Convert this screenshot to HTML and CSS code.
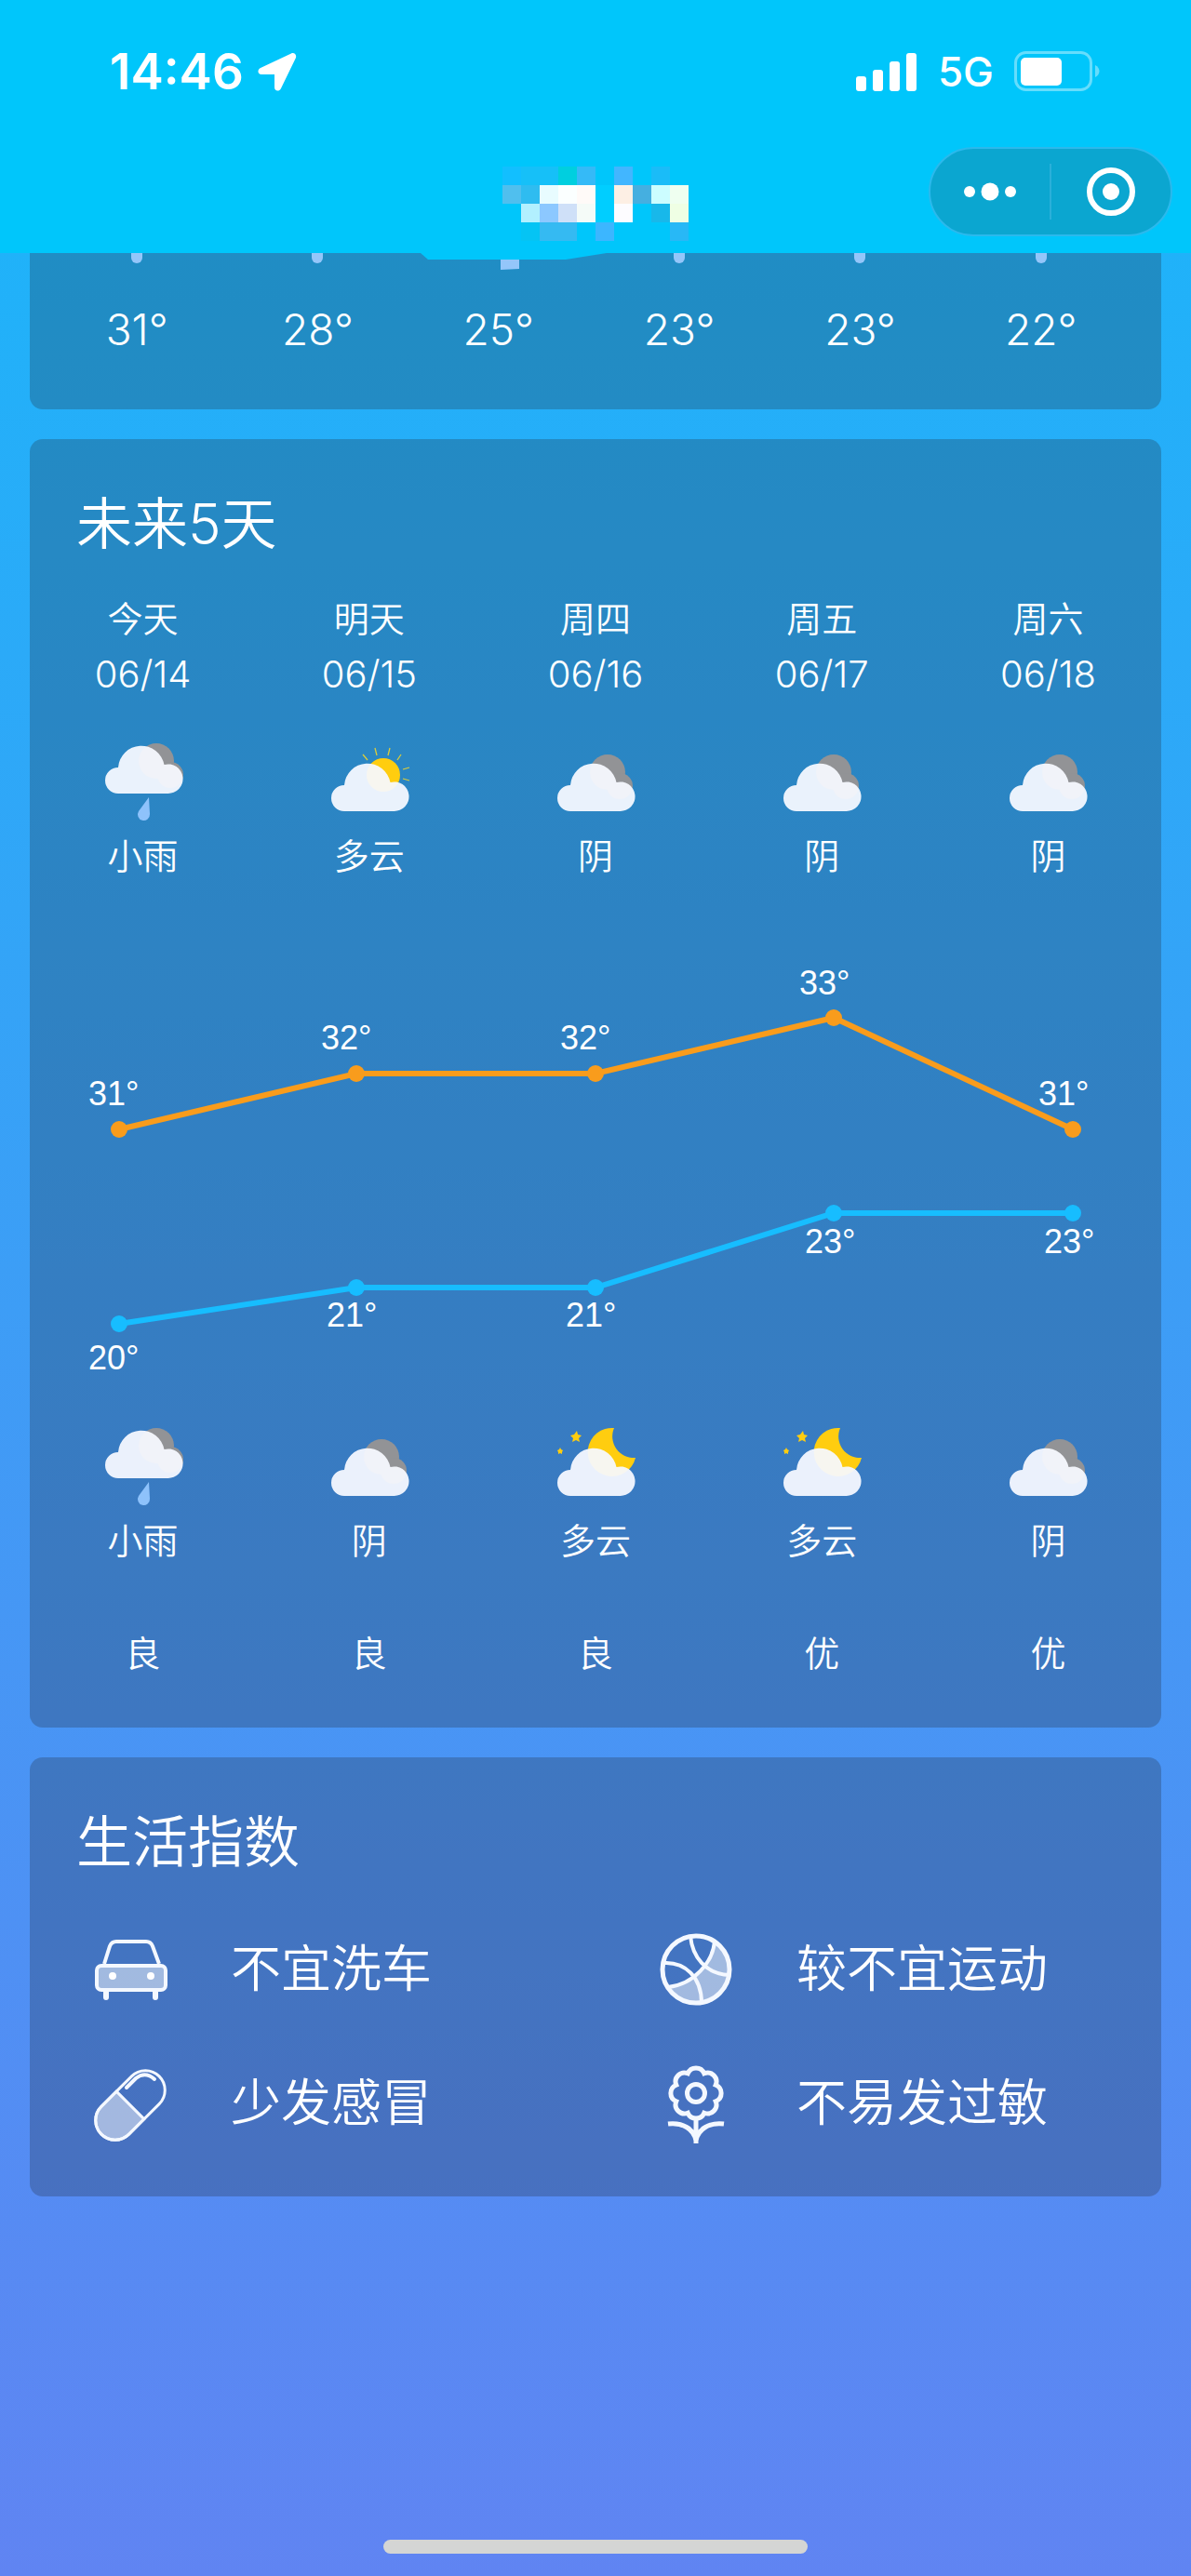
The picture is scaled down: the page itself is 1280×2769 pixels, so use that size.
FILE: index.html
```html
<!DOCTYPE html>
<html lang="zh-CN">
<head>
  <meta charset="UTF-8">
  <meta name="viewport" content="width=device-width, initial-scale=1.0">
  <title>天气</title>
  <link rel="stylesheet" href="styles.css">
</head>
<body>

  <!-- ICONS -->
  <svg class="sprite" aria-hidden="true">
    <symbol id="cloud" viewBox="0 0 88 88">
      <path fill="#f6f9ff" fill-opacity=".94" d="M17 57a14 14 0 0 1 0-28A25 25 0 0 1 66.500 26A15.800 15.800 0 1 1 70 57Z"/>
    </symbol>
    <symbol id="rain" viewBox="0 0 88 88">
      <g fill="#929396"><circle cx="58" cy="22" r="19"/><circle cx="73" cy="37" r="14"/></g>
      <use href="#cloud" width="88" height="88"/>
      <path fill="#8ec2fb" d="M50 61L51 79a6.500 6.500 0 1 1-12-3Z"/>
    </symbol>
    <symbol id="overcast" viewBox="0 0 88 88">
      <g fill="#929396"><circle cx="57" cy="34" r="19"/><circle cx="70" cy="49" r="14"/></g>
      <use href="#cloud" y="19" width="88" height="88"/>
    </symbol>
    <symbol id="cloudy-day" viewBox="0 0 88 88">
      <path stroke="#d9cc3c" stroke-width="1.300" d="M37 15l5 6M50 8l2 8M66 8l-2 8M78 15l-4 6M87 29l-7 2M87 43l-7-2"/>
      <circle cx="59" cy="37" r="18" fill="#ffcd0f"/>
      <use href="#cloud" y="19" width="88" height="88"/>
    </symbol>
    <symbol id="cloudy-night" viewBox="0 0 88 88">
      <path fill="#ffcd0f" d="M64 3A26 26 0 1 0 87 35A23 23 0 0 1 64 3Z"/>
      <path fill="#ffcd0f" d="M24 6l1 4 4 1-3 3 1 4-4-2-4 2 1-4-3-3 4-1zM6 24l1 2 2 1-1 2v2l-2-1-2 1v-2l-1-2 2-1z"/>
      <use href="#cloud" y="19" width="88" height="88"/>
    </symbol>
  </svg>

  <!-- HEADER -->
  <header class="header">
    <div class="status-bar">
      <span class="time">14:46</span>
      <svg class="location" viewBox="0 0 42 42"><path fill="#fff" d="M36 1.500L3 17c-4 2-3 7 1 7h14v14c0 4 5 5 7 1L41 6c1-3-2-6-5-4.500z"/></svg>
      <div class="status-right">
        <svg class="signal" viewBox="0 0 66 42">
          <g fill="#fff"><rect y="26" width="11" height="16" rx="3"/><rect x="18" y="19" width="11" height="23" rx="3"/><rect x="36" y="10" width="11" height="32" rx="3"/><rect x="54" y="1" width="11" height="41" rx="3"/></g>
        </svg>
        <span class="network">5G</span>
        <svg class="battery" viewBox="0 0 92 44">
          <rect x="1.500" y="1.500" width="81" height="40" rx="11" fill="none" stroke="#fff" stroke-opacity=".4" stroke-width="3"/>
          <rect x="7" y="7" width="44" height="30" rx="5" fill="#fff"/>
          <path fill="#fff" fill-opacity=".4" d="M87 15c6 3 6 10 0 13z"/>
        </svg>
      </div>
    </div>
    <div class="nav-bar">
      <svg class="city" viewBox="0 0 200 80" shape-rendering="crispEdges" role="img" aria-label="城市">
        <path fill="#12bfff" d="M0 0h20v20H0z"/><path fill="#16c0f8" d="M20 0h40v20H20z"/><path fill="#00cfdf" d="M60 0h20v20H60z"/><path fill="#35baf7" d="M80 0h20v20H80z"/><path fill="#42b6ff" d="M120 0h20v20h-20z"/><path fill="#1abcf8" d="M160 0h20v20h-20z"/>
        <path fill="#50bfee" d="M0 20h20v20H0z"/><path fill="#2fbcf0" d="M20 20h20v20H20z"/><path fill="#e8fcff" d="M40 20h20v20H40z"/><path fill="#fbffff" d="M60 20h20v20H60z"/><path fill="#fffaf8" d="M80 20h20v20H80z"/><path fill="#00ceff" d="M100 20h20v40h-20z"/><path fill="#fdefe4" d="M120 20h20v20h-20z"/><path fill="#45afe0" d="M140 20h20v20h-20z"/><path fill="#ccfdff" d="M160 20h20v20h-20z"/><path fill="#effff0" d="M180 20h20v20h-20z"/>
        <path fill="#b2f0ff" d="M20 40h20v20H20z"/><path fill="#8cc8ff" d="M40 40h20v20H40z"/><path fill="#cfe0f8" d="M60 40h20v20H60z"/><path fill="#f5fbf8" d="M80 40h20v20H80z"/><path fill="#fdfcff" d="M120 40h20v20h-20z"/><path fill="#18b8ea" d="M160 40h20v20h-20z"/><path fill="#efffe4" d="M180 40h20v20h-20z"/>
        <path fill="#05c4f4" d="M20 60h20v20H20z"/><path fill="#35baf2" d="M40 60h40v20H40z"/><path fill="#3cb6ff" d="M100 60h20v20h-20z"/><path fill="#28b8f6" d="M180 60h20v20h-20z"/>
      </svg>
      <div class="capsule">
        <button type="button" aria-label="更多">
          <svg width="60" height="60" viewBox="0 0 60 60" fill="#fff"><circle cx="8" cy="30" r="6"/><circle cx="30" cy="30" r="9.500"/><circle cx="52" cy="30" r="6"/></svg>
        </button>
        <button type="button" aria-label="关闭">
          <svg width="60" height="60" viewBox="0 0 60 60"><circle cx="30" cy="30" r="23" fill="none" stroke="#fff" stroke-width="6"/><circle cx="30" cy="30" r="9" fill="#fff"/></svg>
        </button>
      </div>
    </div>
    <svg class="header-edge" viewBox="0 0 200 7"><path fill="#00c6fb" d="M0 0L8 7H156L200 0Z"/></svg>
  </header>

  <main class="content">

    <!-- HOURLY -->
    <section class="card hourly">
      <div class="hour"><svg class="drop" viewBox="0 0 12 11"><path d="M0 0H12V5a6 6 0 0 1-12 0Z"/></svg><span>31°</span></div>
      <div class="hour"><svg class="drop" viewBox="0 0 12 11"><path d="M0 0H12V5a6 6 0 0 1-12 0Z"/></svg><span>28°</span></div>
      <div class="hour"><svg class="drop wide" viewBox="0 0 44 18"><path d="M24 0H44V17L24 18Z"/></svg><span>25°</span></div>
      <div class="hour"><svg class="drop" viewBox="0 0 12 11"><path d="M0 0H12V5a6 6 0 0 1-12 0Z"/></svg><span>23°</span></div>
      <div class="hour"><svg class="drop" viewBox="0 0 12 11"><path d="M0 0H12V5a6 6 0 0 1-12 0Z"/></svg><span>23°</span></div>
      <div class="hour"><svg class="drop" viewBox="0 0 12 11"><path d="M0 0H12V5a6 6 0 0 1-12 0Z"/></svg><span>22°</span></div>
    </section>

    <!-- 5 DAYS -->
    <section class="card">
      <h2>未来5天</h2>
      <div class="days">
        <div class="day"><span>今天</span><span class="date">06/14</span><svg class="weather"><use href="#rain"/></svg><span>小雨</span></div>
        <div class="day"><span>明天</span><span class="date">06/15</span><svg class="weather"><use href="#cloudy-day"/></svg><span>多云</span></div>
        <div class="day"><span>周四</span><span class="date">06/16</span><svg class="weather"><use href="#overcast"/></svg><span>阴</span></div>
        <div class="day"><span>周五</span><span class="date">06/17</span><svg class="weather"><use href="#overcast"/></svg><span>阴</span></div>
        <div class="day"><span>周六</span><span class="date">06/18</span><svg class="weather"><use href="#overcast"/></svg><span>阴</span></div>
      </div>

      <svg class="chart" viewBox="0 0 1216 582">
        <g class="high">
          <polyline points="96,264 351,204 608,204 864,144 1121,264"/>
          <circle cx="96" cy="264" r="9"/><circle cx="351" cy="204" r="9"/><circle cx="608" cy="204" r="9"/><circle cx="864" cy="144" r="9"/><circle cx="1121" cy="264" r="9"/>
        </g>
        <g class="low">
          <polyline points="96,473 351,434 608,434 864,354 1121,354"/>
          <circle cx="96" cy="473" r="9"/><circle cx="351" cy="434" r="9"/><circle cx="608" cy="434" r="9"/><circle cx="864" cy="354" r="9"/><circle cx="1121" cy="354" r="9"/>
        </g>
        <g class="labels">
          <text x="63" y="238">31°</text><text x="313" y="178">32°</text><text x="570" y="178">32°</text><text x="827" y="119">33°</text><text x="1084" y="238">31°</text>
          <text x="63" y="522">20°</text><text x="319" y="476">21°</text><text x="576" y="476">21°</text><text x="833" y="397">23°</text><text x="1090" y="397">23°</text>
        </g>
      </svg>

      <div class="nights">
        <div class="night"><svg class="weather"><use href="#rain"/></svg><span>小雨</span><span class="air">良</span></div>
        <div class="night"><svg class="weather"><use href="#overcast"/></svg><span>阴</span><span class="air">良</span></div>
        <div class="night"><svg class="weather"><use href="#cloudy-night"/></svg><span>多云</span><span class="air">良</span></div>
        <div class="night"><svg class="weather"><use href="#cloudy-night"/></svg><span>多云</span><span class="air">优</span></div>
        <div class="night"><svg class="weather"><use href="#overcast"/></svg><span>阴</span><span class="air">优</span></div>
      </div>
    </section>

    <!-- LIFE INDEX -->
    <section class="card life">
      <h2>生活指数</h2>
      <ul class="life-list">
        <li>
          <svg class="life-icon" viewBox="0 0 88 88">
            <path stroke-width="4" d="M16 38L22 19Q24 14 29 14H61Q66 14 68 19L75 38"/>
            <rect x="8" y="40" width="74" height="26" rx="5" class="tint" stroke-width="4"/>
            <path stroke-width="6" stroke-linecap="round" d="M18 68v6M71 68v6"/>
            <circle cx="25" cy="51" r="4" fill="#fff" stroke="none"/><circle cx="66" cy="51" r="4" fill="#fff" stroke="none"/>
          </svg>
          <span>不宜洗车</span>
        </li>
        <li>
          <svg class="life-icon" viewBox="0 0 88 88">
            <path class="tint" stroke="none" d="M63.500 13C62 36 42 58 15 63A36 36 0 1 0 63.500 13Z"/>
            <g stroke-width="4"><path d="M38 8C40 30 54 49 80 50M64 14C62 36 42 60 14 63M10 37C32 36 50 52 50 80"/></g>
            <circle cx="44" cy="44" r="36" stroke-width="5"/>
          </svg>
          <span>较不宜运动</span>
        </li>
        <li>
          <svg class="life-icon" viewBox="0 0 88 88">
            <g transform="rotate(45 44 46)" stroke-width="3">
              <path class="tint" d="M23 46H65V69a21 21 0 0 1-42 0Z"/>
              <rect x="23" y="2" width="42" height="88" rx="21"/>
            </g>
            <path stroke-width="4" stroke-linecap="round" d="M40 27L50 17Q60 9 70 18"/>
          </svg>
          <span>少发感冒</span>
        </li>
        <li>
          <svg class="life-icon" viewBox="0 0 88 88" stroke-width="5">
            <circle cx="44" cy="33" r="9.500"/>
            <path d="M35.200 11.800a9.500 9.500 0 0 1 17.600 0a9.500 9.500 0 0 1 12.400 12.400a9.500 9.500 0 0 1 0 17.600a9.500 9.500 0 0 1-12.400 12.400a9.500 9.500 0 0 1-17.600 0a9.500 9.500 0 0 1-12.400-12.400a9.500 9.500 0 0 1 0-17.600a9.500 9.500 0 0 1 12.400-12.400Z"/>
            <path d="M44 60V87M14 66C30 64 42 72 44 84C46 72 58 64 74 66"/>
          </svg>
          <span>不易发过敏</span>
        </li>
      </ul>
    </section>
  </main>

  <div class="home-indicator"></div>

</body>
</html>
```
FILE: styles.css
```css
* {
  box-sizing: border-box;
}

body {
  margin: 0;
  min-height: 100vh;
  display: flex;
  flex-direction: column;
  font-family: Inter, "Noto Sans CJK SC", sans-serif;
  font-weight: 350;
  color: #fff;
  background: linear-gradient(#19b7fa, #6084f2);
}

svg {
  display: block;
}

.sprite {
  position: absolute;
  width: 0;
  height: 0;
}

/* header */
.header {
  position: relative;
  height: 272px;
  background: #00c6fb;
}

.status-bar {
  display: flex;
  align-items: center;
  padding: 44px 98px 0 118px;
  height: 110px;
}

.time {
  font-size: 53px;
  font-weight: 600;
}

.location {
  width: 42px;
  height: 42px;
  margin-left: 15px;
}

.status-right {
  display: flex;
  align-items: center;
  gap: 22px;
  margin-left: auto;
}

.signal {
  width: 66px;
  height: 42px;
}

.network {
  font-size: 44px;
  font-weight: 500;
}

.battery {
  width: 92px;
  height: 44px;
}

.nav-bar {
  display: grid;
  grid-template-columns: 1fr 200px 1fr;
  align-items: end;
  height: 149px;
  padding: 0 20px;
}

.city {
  grid-column: 2;
  width: 200px;
  height: 80px;
}

.capsule {
  display: flex;
  justify-self: end;
  width: 262px;
  height: 96px;
  margin-bottom: 5px;
  padding: 16px 0;
  border: 2px solid #2bb9ec;
  border-radius: 48px;
  background: #0ba6d0;
}

.capsule button {
  flex: 1;
  display: flex;
  justify-content: center;
  align-items: center;
  padding: 0;
  border: none;
  background: none;
  cursor: pointer;
}

.capsule button + button {
  border-left: 2px solid #2bb0da;
}

.header-edge {
  position: absolute;
  top: 100%;
  left: 452px;
  width: 200px;
  height: 7px;
}

/* cards */
.content {
  display: flex;
  flex-direction: column;
  gap: 32px;
  padding: 0 32px;
}

.card {
  border-radius: 14px;
  background: rgba(30, 30, 40, 0.25);
}

.card h2 {
  margin: 0;
  padding: 49px 50px 0;
  font-size: 60px;
  line-height: 84px;
  font-weight: 350;
}

.hourly {
  display: grid;
  grid-template-columns: repeat(6, 1fr);
  height: 168px;
  padding: 0 32px 0 18px;
  border-radius: 0 0 14px 14px;
  font-size: 46px;
  line-height: 60px;
}

.hour {
  display: grid;
  grid-template-rows: 52px 60px;
  justify-items: center;
}

.drop {
  width: 12px;
  height: 11px;
  fill: #94c6fa;
}

.drop.wide {
  width: 44px;
  height: 18px;
}

.days,
.nights {
  display: grid;
  grid-template-columns: repeat(5, 1fr);
  font-size: 38px;
  line-height: 60px;
}

.days {
  padding-top: 30px;
}

.nights {
  padding-bottom: 50px;
}

.day,
.night {
  display: flex;
  flex-direction: column;
  align-items: center;
}

.date {
  font-size: 40px;
}

.weather {
  width: 88px;
  height: 88px;
  margin-bottom: 6px;
}

.day .weather {
  margin-top: 41px;
}

.air {
  margin-top: 61px;
}

/* temperature lines */
.chart {
  width: 100%;
}

.chart polyline {
  fill: none;
  stroke-width: 6;
}

.high {
  stroke: #f99c1c;
  fill: #f99c1c;
}

.low {
  stroke: #17bdff;
  fill: #17bdff;
}

.chart circle {
  stroke: none;
}

.labels {
  fill: #fff;
  font-family: "Liberation Sans", sans-serif;
  font-size: 36px;
  font-weight: 400;
}

/* life index */
.life-list {
  display: grid;
  grid-template-columns: 1fr 1fr;
  margin: 0;
  padding: 23px 0 28px;
  list-style: none;
  font-size: 54px;
  line-height: 76px;
}

.life-list li {
  display: flex;
  align-items: center;
  gap: 64px;
  height: 144px;
  padding-left: 64px;
}

.life-icon {
  width: 88px;
  height: 88px;
  fill: none;
  stroke: #f4f8ff;
}

.tint {
  fill: rgba(255, 255, 255, 0.5);
}

.home-indicator {
  width: 456px;
  height: 15px;
  margin: auto auto 24px;
  border-radius: 8px;
  background: #d4d5d4;
}
```
